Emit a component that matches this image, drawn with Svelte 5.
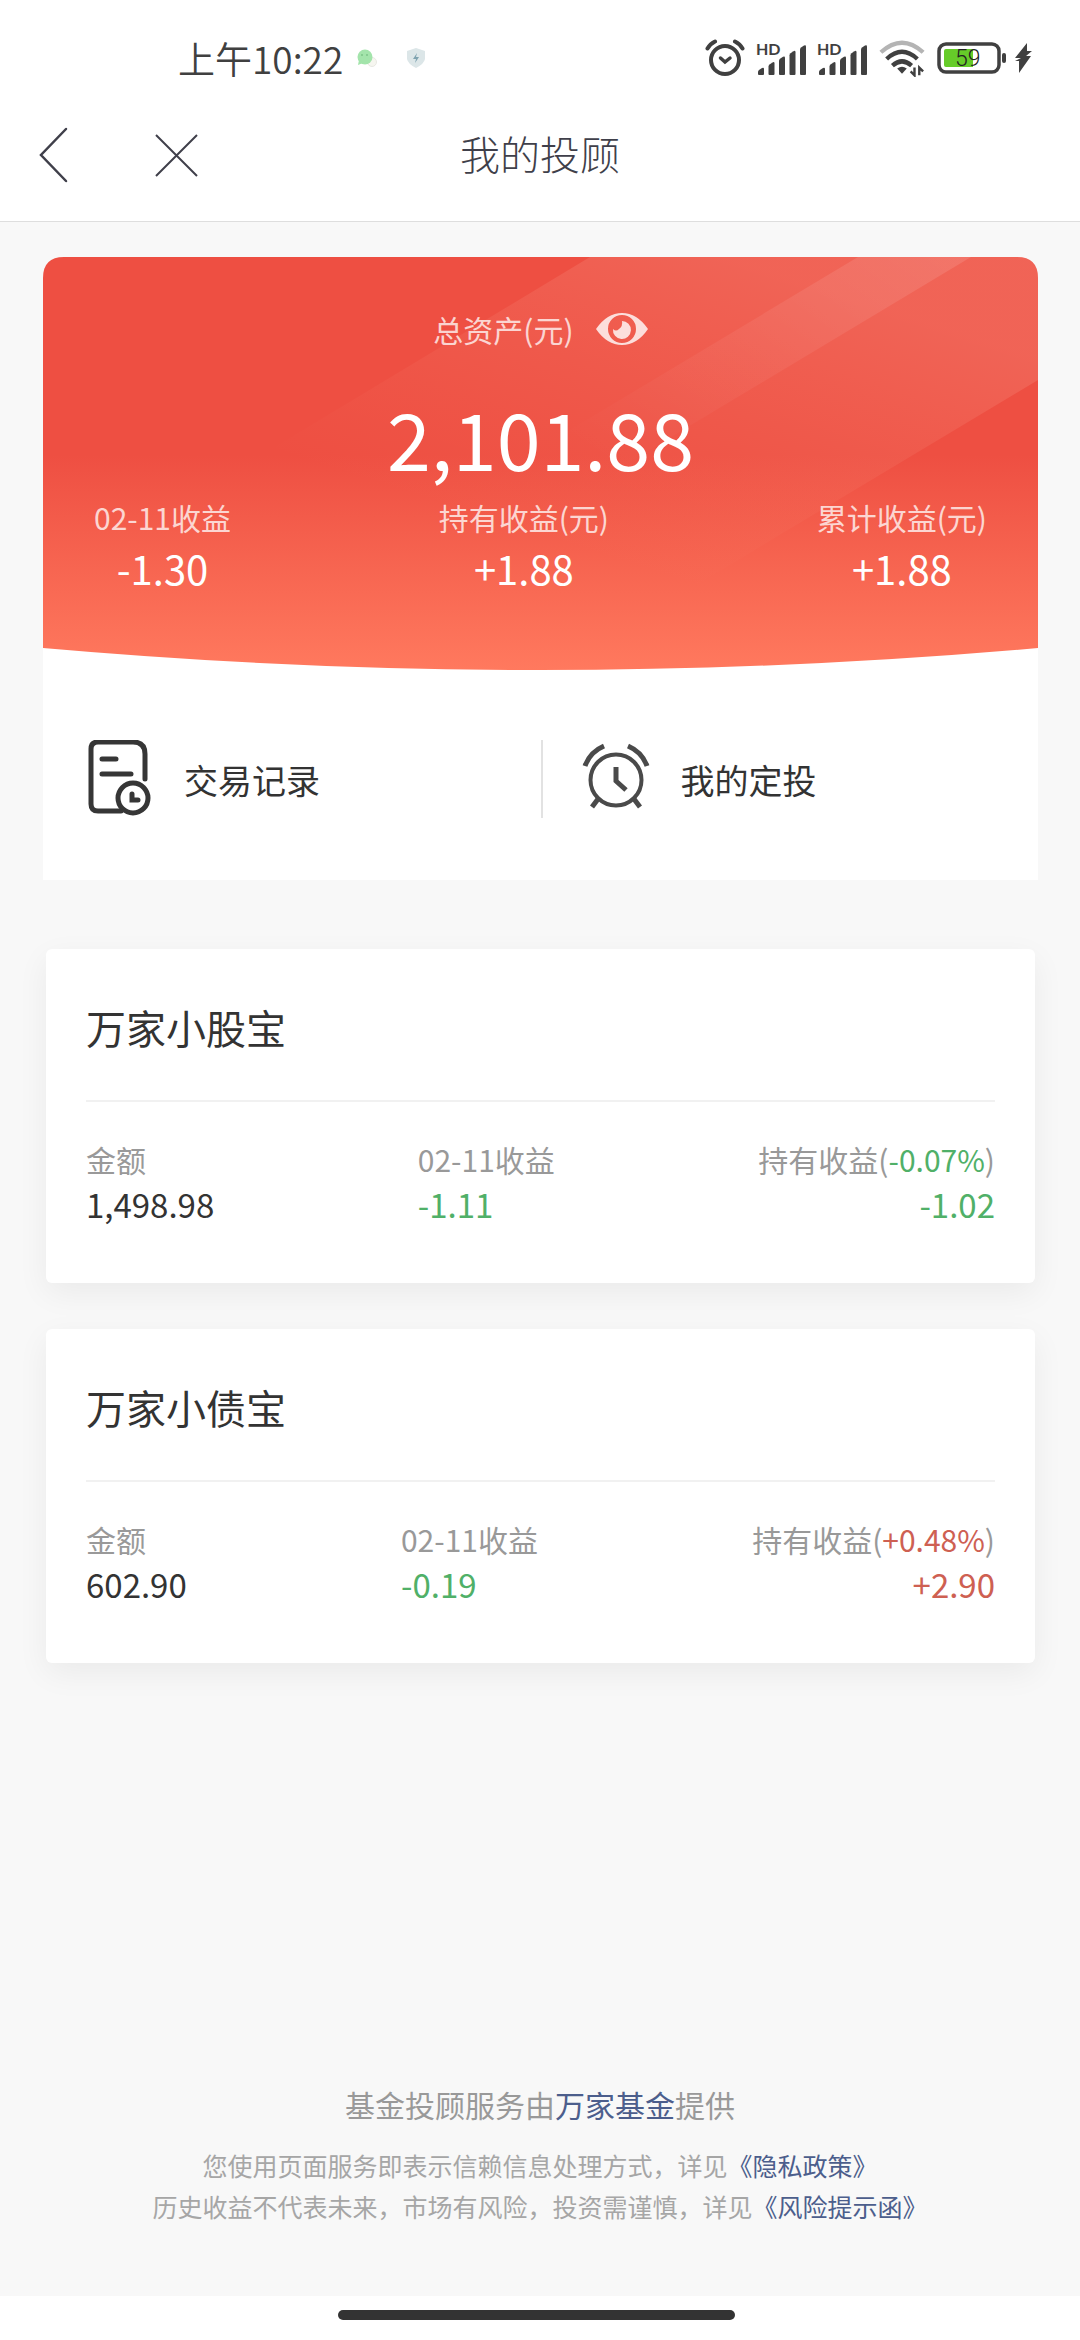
<script>
  let visible = true;

  const summary = [
    { label: "02-11收益", value: "-1.30" },
    { label: "持有收益(元)", value: "+1.88" },
    { label: "累计收益(元)", value: "+1.88" }
  ];

  const holdings = [
    {
      name: "万家小股宝",
      amount: "1,498.98",
      daily: "-1.11",
      rate: "-0.07%",
      total: "-1.02"
    },
    {
      name: "万家小债宝",
      amount: "602.90",
      daily: "-0.19",
      rate: "+0.48%",
      total: "+2.90"
    }
  ];

  const bars = [0, 1, 2, 3, 4];

  const trend = value => (value.startsWith("-") ? "down" : "up");
  const mask = (value, show) => (show ? value : "****");
</script>

<style>
  :global(body) {
    margin: 0;
    background: #f8f8f8;
    font-family: "Noto Sans CJK SC", "Noto Sans", sans-serif;
    color: #333;
  }
  .page {
    display: flex;
    flex-direction: column;
    min-height: 100vh;
  }
  svg {
    display: block;
    flex: none;
  }
  button {
    padding: 0;
    border: 0;
    background: none;
    font: inherit;
    color: inherit;
    cursor: pointer;
  }
  a {
    color: #4c5e8c;
    text-decoration: none;
  }
  h1,
  h2,
  p,
  dl,
  dd {
    margin: 0;
    font-weight: 400;
  }

  /* status bar */
  .status {
    display: flex;
    align-items: center;
    justify-content: space-between;
    height: 60px;
    padding: 28px 48px 0 178px;
    background: #fff;
    color: #404040;
  }
  .left,
  .right,
  .power {
    display: flex;
    align-items: center;
  }
  .left {
    gap: 30px;
  }
  .clock {
    display: flex;
    align-items: center;
    gap: 14px;
    font-size: 37px;
    line-height: 52px;
    font-weight: 350;
  }
  .right {
    gap: 11px;
  }
  .power {
    gap: 8px;
  }
  .hd {
    font: 700 16px Lato, sans-serif;
  }
  .level {
    font: 300 23px Roboto, sans-serif;
  }

  /* title bar */
  .nav {
    display: grid;
    grid-template-columns: 1fr auto 1fr;
    align-items: center;
    height: 133px;
    padding: 0 36px;
    border-bottom: 1px solid #dedede;
    background: #fff;
    color: #3f3f4a;
  }
  .nav-buttons {
    display: flex;
    gap: 80px;
  }
  .nav h1 {
    padding-bottom: 4px;
    font-size: 40px;
    line-height: 60px;
    font-weight: 300;
  }

  main {
    flex: 1;
    padding: 35px 42px 0 43px;
  }

  /* assets */
  .assets {
    background: linear-gradient(#f8f8f8 60px, #fff 60px);
  }
  .hero {
    position: relative;
    padding: 50px 51px 73px;
    color: #fff;
  }
  .hero-bg {
    position: absolute;
    top: 0;
    left: 0;
    width: 100%;
    height: 100%;
  }
  .hero-body {
    position: relative;
  }
  .caption {
    display: flex;
    align-items: center;
    justify-content: center;
    gap: 22px;
    font-size: 30px;
    line-height: 44px;
    color: rgba(255, 255, 255, 0.75);
  }
  .amount {
    margin: 38px 0 10px;
    font-size: 79px;
    line-height: 96px;
    text-align: center;
  }
  .summary {
    display: flex;
    justify-content: space-between;
    text-align: center;
  }
  .summary dt {
    font-size: 30px;
    line-height: 44px;
    color: rgba(255, 255, 255, 0.75);
  }
  .summary dd {
    font-size: 40px;
    line-height: 58px;
  }
  .actions {
    display: grid;
    grid-template-columns: 1fr 1fr;
    padding: 70px 0 62px;
  }
  .actions button {
    display: flex;
    align-items: center;
    gap: 27px;
    height: 78px;
    padding: 0 38px;
    font-size: 34px;
  }
  .actions button + button {
    padding-left: 35px;
    border-left: 2px solid #e2e2e2;
  }

  /* holdings */
  .holding {
    margin: 69px 3px 0;
    padding: 48px 40px 56px;
    border-radius: 6px;
    background: #fff;
    box-shadow: 0 10px 32px rgba(0, 0, 0, 0.06);
  }
  .holding + .holding {
    margin-top: 46px;
  }
  .holding h2 {
    padding-bottom: 43px;
    border-bottom: 2px solid #f1f1f1;
    font-size: 40px;
    line-height: 60px;
  }
  .figures {
    display: flex;
    justify-content: space-between;
    margin-top: 35px;
  }
  .figures div:last-child {
    text-align: right;
  }
  .figures dt {
    font-size: 30px;
    line-height: 44px;
    color: #999;
  }
  .figures dd {
    font-size: 33px;
    line-height: 46px;
  }
  .figures .down {
    color: #50b068;
  }
  .figures .up {
    color: #ce6052;
  }

  footer {
    padding: 0 40px 69px;
    text-align: center;
    font-size: 25px;
    line-height: 41px;
    color: #a6a6a6;
  }
  .provider {
    margin-bottom: 19px;
    font-size: 30px;
    line-height: 44px;
    color: #999;
  }
  .home {
    display: flex;
    justify-content: center;
    padding: 14px 7px 20px 0;
    background: #fff;
  }
  .home span {
    width: 37%;
    height: 10px;
    border-radius: 5px;
    background: #333;
  }
</style>

<div class="page">
  <div class="status">
    <div class="left">
      <div class="clock">
        上午10:22
        <svg width="20" height="20" viewBox="0 0 20 20">
          <circle cx="15" cy="14" r="4.500" fill="#f6f6f0" stroke="#e8e8e2" />
          <circle cx="8" cy="9" r="7.500" fill="#a3e4ab" />
          <path d="M2 12l-1 5 5-2z" fill="#a3e4ab" />
          <circle cx="5" cy="7" r="1" fill="#7cc488" />
          <circle cx="10" cy="7" r="1" fill="#7cc488" />
        </svg>
      </div>
      <svg width="18" height="20" viewBox="0 0 18 20">
        <path d="M9 0l9 3v8q-1 5-9 9q-8-4-9-9V3z" fill="#dce6e8" />
        <path d="M10 5l-4 6h3l-1 4 4-6H9z" fill="#7fa3b0" />
      </svg>
    </div>
    <div class="right">
      <svg width="40" height="38" viewBox="0 0 40 38" fill="none" stroke="#404040" stroke-linecap="round">
        <circle cx="20" cy="21" r="14" stroke-width="4" />
        <path d="M2.500 9.500Q5 5 10 2.500M37.500 9.500Q35 5 30 2.500" stroke-width="4" />
        <path d="M15.500 19l4.500 4 5-4" stroke-width="3.500" />
      </svg>
      {#each [1, 2] as sim}
        <svg width="50" height="38" viewBox="0 0 50 38" fill="#404040">
          <text class="hd" x="0" y="16">HD</text>
          {#each bars as i}
            <path
              d="M{3 + i * 10.5} 36q-1 0-1-1v{-2 - i * 5.6}q0-1 1-2l3-2q2-1 2 1v{5 + i * 5.6}q0 1-1 1z" />
          {/each}
        </svg>
      {/each}
      <svg width="48" height="37" viewBox="0 0 50 37" fill="none" stroke="#404040" stroke-width="4.500">
        <path d="M3 12Q25-8 47 12" stroke="#b4b4b4" />
        <path d="M9 19Q25 4 41 19" />
        <path d="M15 26Q25 17 35 26" />
        <path d="M20 29q5-4 10 0l-5 5.500z" fill="#404040" stroke="none" />
        <path d="M38 28v8l-4-4M43 36v-8l4 4" stroke-width="2.500" />
      </svg>
      <div class="power">
        <svg width="69" height="32" viewBox="0 0 69 32">
          <rect x="2" y="2" width="60" height="28" rx="7" fill="none" stroke="#404040" stroke-width="3.500" />
          <path d="M9 7h27v18H9q-2 0-2-2V9q0-2 2-2z" fill="#66cc29" />
          <text class="level" x="18" y="24" fill="#222">59</text>
          <rect x="65" y="11" width="4" height="10" rx="2" fill="#404040" />
        </svg>
        <svg width="18" height="30" viewBox="0 0 18 30">
          <path d="M13 0L1 15h6L1 18h4l0 12L17 13h-5l6-5h-5z" fill="#404040" />
        </svg>
      </div>
    </div>
  </div>

  <header class="nav">
    <div class="nav-buttons">
      <button aria-label="返回">
        <svg width="36" height="56" viewBox="0 0 36 56" fill="none" stroke="currentColor" stroke-width="2.500">
          <path d="M30 2L5 28l25 26" stroke-linecap="round" />
        </svg>
      </button>
      <button aria-label="关闭">
        <svg width="48" height="56" viewBox="0 0 48 56" fill="none" stroke="currentColor" stroke-width="2">
          <path d="M4 8l41 41M45 8L4 49" />
        </svg>
      </button>
    </div>
    <h1>我的投顾</h1>
  </header>

  <main>
    <section class="assets">
      <div class="hero">
        <svg class="hero-bg" viewBox="0 0 995 413" preserveAspectRatio="none">
          <defs>
            <linearGradient id="base" x1="0" y1="0" x2="0" y2="1">
              <stop offset="0.480" stop-color="#ee4f42" />
              <stop offset="1" stop-color="#ff795e" />
            </linearGradient>
            <linearGradient id="wide" gradientUnits="userSpaceOnUse" x1="620" y1="-20" x2="520" y2="290">
              <stop offset="0" stop-color="#ffd8c8" stop-opacity="0.150" />
              <stop offset="1" stop-color="#ffb090" stop-opacity="0" />
            </linearGradient>
            <linearGradient id="narrow" gradientUnits="userSpaceOnUse" x1="900" y1="0" x2="700" y2="300">
              <stop offset="0" stop-color="#fff" stop-opacity="0.110" />
              <stop offset="1" stop-color="#fff" stop-opacity="0" />
            </linearGradient>
            <clipPath id="shape">
              <path d="M0 21Q0 0 21 0H974Q995 0 995 21V391Q497 435 0 391z" />
            </clipPath>
          </defs>
          <g clip-path="url(#shape)">
            <rect width="995" height="413" fill="url(#base)" />
            <path d="M547 0H995V123L530 402H-120z" fill="url(#wide)" />
            <path d="M815 0H928L258 402H145z" fill="url(#narrow)" />
          </g>
        </svg>
        <div class="hero-body">
          <div class="caption">
            总资产(元)
            <button aria-label="显示或隐藏金额" on:click={() => (visible = !visible)}>
              <svg width="52" height="32" viewBox="0 0 52 32" fill="#fff" fill-opacity="0.800">
                <path
                  fill-rule="evenodd"
                  d="M0 16Q11 0 26 0T52 16Q41 32 26 32T0 16zM26 2a14 14 0 1 0 0 28a14 14 0 1 0 0-28z" />
                <path d="M26 8a9 9 0 1 1-9 8q3 3 6 0q4-3 3-8z" />
              </svg>
            </button>
          </div>
          <p class="amount">{mask("2,101.88", visible)}</p>
          <dl class="summary">
            {#each summary as item}
              <div>
                <dt>{item.label}</dt>
                <dd>{mask(item.value, visible)}</dd>
              </div>
            {/each}
          </dl>
        </div>
      </div>

      <div class="actions">
        <button>
          <svg width="76" height="78" viewBox="0 0 76 78" fill="none" stroke="#363636" stroke-width="5" stroke-linecap="round">
            <path d="M40 71H17q-7 0-7-7V9q0-7 7-7h35q12 0 12 12v25" />
            <path d="M21 19h14M21 34h29" />
            <circle cx="52" cy="58" r="15" />
            <path d="M51 54v6h6" />
          </svg>
          交易记录
        </button>
        <button>
          <svg width="76" height="78" viewBox="0 0 76 78" fill="none" stroke="#4a4a4a" stroke-width="4">
            <circle cx="38" cy="40" r="25.500" />
            <path d="M7 26Q12 12 26 6M50 6Q64 12 69 26" stroke-width="5" />
            <path d="M38 27v14l10 9" stroke-width="5" />
            <path d="M20 59l-6 8M56 59l6 8" stroke-width="5" />
          </svg>
          我的定投
        </button>
      </div>
    </section>

    {#each holdings as item}
      <section class="holding">
        <h2>{item.name}</h2>
        <dl class="figures">
          <div>
            <dt>金额</dt>
            <dd>{mask(item.amount, visible)}</dd>
          </div>
          <div>
            <dt>02-11收益</dt>
            <dd class={trend(item.daily)}>{mask(item.daily, visible)}</dd>
          </div>
          <div>
            <dt>持有收益(<span class={trend(item.rate)}>{item.rate}</span>)</dt>
            <dd class={trend(item.total)}>{mask(item.total, visible)}</dd>
          </div>
        </dl>
      </section>
    {/each}
  </main>

  <footer>
    <p class="provider">基金投顾服务由<a href="#provider">万家基金</a>提供</p>
    <p>您使用页面服务即表示信赖信息处理方式，详见<a href="#privacy">《隐私政策》</a></p>
    <p>历史收益不代表未来，市场有风险，投资需谨慎，详见<a href="#risk">《风险提示函》</a></p>
  </footer>
  <div class="home"><span></span></div>
</div>
